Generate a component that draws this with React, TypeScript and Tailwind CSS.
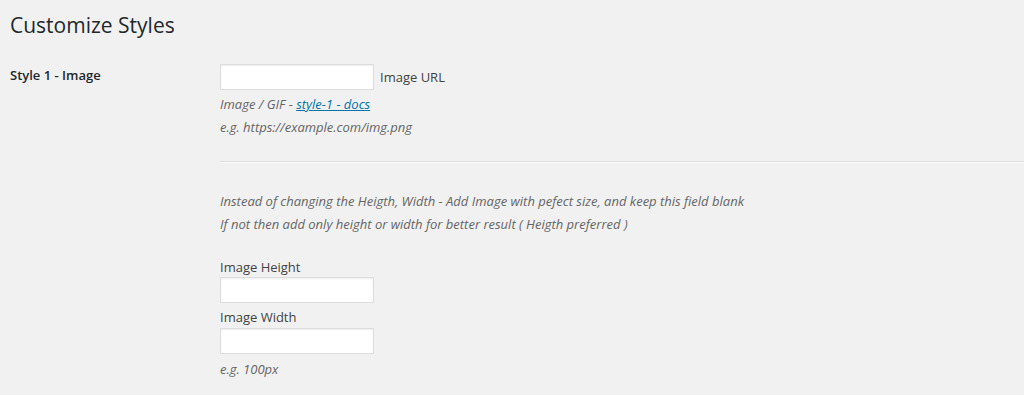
import React from "react";

const font = { fontFamily: '"Open Sans", "Noto Sans", sans-serif' };

function TextInput() {
  return (
    <input
      type="text"
      className="block h-[26px] w-[154px] border border-[#dddddd] bg-white shadow-[inset_0_1px_2px_rgba(0,0,0,0.07)] outline-none"
    />
  );
}

function Hint({ children, className = "" }: { children: React.ReactNode; className?: string }) {
  return (
    <p className={`text-[13px] leading-[20px] italic text-[#666666] ${className}`}>
      {children}
    </p>
  );
}

export default function App() {
  return (
    <div className="min-h-[395px] bg-[#f1f1f1] pl-[10px]" style={font}>
      <h1 className="pt-[11px] text-[21px] leading-[29px] font-normal text-[#23282d]">
        Customize Styles
      </h1>

      <div className="mt-[24px] flex">
        <div className="w-[210px] pt-[1px] text-[13px] leading-[20px] font-semibold text-[#23282d]">
          Style 1 - Image
        </div>

        <div className="flex-1">
          <div className="flex items-center">
            <TextInput />
            <span className="ml-[6px] text-[13px] leading-[20px] text-[#444444]">Image URL</span>
          </div>
          <Hint className="mt-[4px]">
            Image / GIF -{" "}
            <a href="#" className="text-[#0073aa] underline">
              style-1 - docs
            </a>
          </Hint>
          <Hint className="mt-[3px]">e.g. https://example.com/img.png</Hint>

          <hr className="mt-[24px] border-0 border-t border-b border-t-[#dddddd] border-b-[#fafafa]" />

          <Hint className="mt-[28px]">
            Instead of changing the Heigth, Width - Add Image with pefect size, and keep this field blank
          </Hint>
          <Hint className="mt-[3px]">
            If not then add only height or width for better result ( Heigth preferred )
          </Hint>

          <div className="mt-[23px] text-[13px] leading-[20px] text-[#444444]">Image Height</div>
          <TextInput />
          <div className="mt-[4px] text-[13px] leading-[20px] text-[#444444]">Image Width</div>
          <div className="mt-[1px]">
            <TextInput />
          </div>
          <Hint className="mt-[5px]">e.g. 100px</Hint>
        </div>
      </div>
    </div>
  );
}
